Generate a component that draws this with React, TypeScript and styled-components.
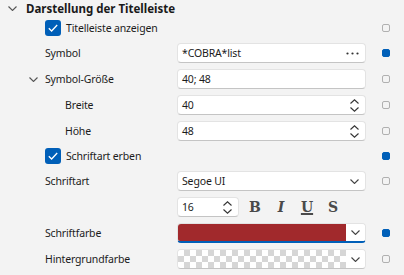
import styled, { createGlobalStyle } from 'styled-components';

const GlobalStyle = createGlobalStyle`
  html, body {
    margin: 0;
    padding: 0;
    background: #f3f3f3;
    font-family: "Segoe UI", "Noto Sans", "Liberation Sans", sans-serif;
    font-size: 10.5px;
    letter-spacing: -0.15px;
    color: #1b1b1b;
  }
`;

const Panel = styled.div`
  width: 404px;
  height: 275px;
  overflow: hidden;
  display: flex;
  flex-direction: column;
`;

const Header = styled.div`
  height: 16px;
  display: flex;
  align-items: center;
  padding-left: 8px;
  gap: 9px;
  font-weight: 700;
  font-size: 11.5px;
  letter-spacing: 0;
  color: #1a1a1a;
`;

const Row = styled.div<{ $h?: number }>`
  display: grid;
  grid-template-columns: 177px 189px 16px 8px;
  align-items: center;
  height: ${p => p.$h ?? 26}px;
`;

const Label = styled.div<{ $indent: number }>`
  display: flex;
  align-items: center;
  padding-left: ${p => p.$indent}px;
  white-space: nowrap;
`;

const Slot = styled.span`
  width: 16px;
  display: flex;
  align-items: center;
`;

const CheckLabel = styled.label`
  grid-column: 1 / 3;
  display: flex;
  align-items: center;
  gap: 5px;
  padding-left: 45px;
`;

const Box = styled.span`
  width: 16px;
  height: 16px;
  border-radius: 3px;
  background: #005fb8;
  display: flex;
  align-items: center;
  justify-content: center;
`;

const Field = styled.div`
  height: 20px;
  box-sizing: border-box;
  background: #fff;
  border: 1px solid #e3e3e3;
  border-bottom-color: #c4c4c4;
  border-radius: 4px;
  display: flex;
  align-items: center;
  padding: 0 6px 0 4px;
  justify-content: space-between;
`;

const SmallField = styled(Field)`
  width: 62px;
`;

const Tools = styled.div`
  display: flex;
  align-items: center;
`;

const StyleBtn = styled.span<{ $deco?: string; $italic?: boolean }>`
  width: 26px;
  text-align: center;
  font-family: "DejaVu Serif", "Liberation Serif", serif;
  font-weight: 700;
  font-size: 14px;
  letter-spacing: 0;
  color: #4a4a4a;
  font-style: ${p => (p.$italic ? 'italic' : 'normal')};
  text-decoration: ${p => p.$deco ?? 'none'};
  text-decoration-thickness: 2px;
`;

const Swatch = styled.div<{ $focused?: boolean }>`
  height: 20px;
  box-sizing: border-box;
  display: flex;
  border-radius: 4px;
  overflow: hidden;
  border: 1px solid #e3e3e3;
  border-bottom: ${p => (p.$focused ? '2px solid #005fb8' : '1px solid #c4c4c4')};
`;

const Fill = styled.div<{ $color?: string }>`
  flex: 1;
  background: ${p => p.$color ?? '#fff'};
  background-image: ${p =>
    p.$color
      ? 'none'
      : 'linear-gradient(45deg, #d6d6d6 25%, transparent 25%, transparent 75%, #d6d6d6 75%), linear-gradient(45deg, #d6d6d6 25%, transparent 25%, transparent 75%, #d6d6d6 75%)'};
  background-size: 12px 12px;
  background-position: 0 0, 6px 6px;
`;

const DropBtn = styled.div`
  width: 19px;
  background: #fff;
  display: flex;
  align-items: center;
  justify-content: center;
`;

const Indicator = styled.span<{ $active?: boolean }>`
  grid-column: 4;
  width: 8px;
  height: 8px;
  box-sizing: border-box;
  border-radius: 2px;
  background: ${p => (p.$active ? '#005fb8' : 'transparent')};
  border: 1px solid ${p => (p.$active ? '#005fb8' : '#b0b0b0')};
`;

const Chevron = ({ color = '#444' }: { color?: string }) => (
  <svg width="9" height="5" viewBox="0 0 9 5">
    <path d="M0.5 0.5 L4.5 4.5 L8.5 0.5" fill="none" stroke={color} strokeWidth="1.1" />
  </svg>
);

const Check = () => (
  <svg width="10" height="8" viewBox="0 0 10 8">
    <path d="M0.8 4.2 L3.6 7 L9.2 1" fill="none" stroke="#fff" strokeWidth="1.3" />
  </svg>
);

const Spin = () => (
  <svg width="9" height="13" viewBox="0 0 9 13">
    <path d="M0.5 4.5 L4.5 0.8 L8.5 4.5 M0.5 8.5 L4.5 12.2 L8.5 8.5" fill="none" stroke="#333" strokeWidth="1.1" />
  </svg>
);

const Dots = () => (
  <svg width="13" height="3" viewBox="0 0 13 3">
    <circle cx="1.5" cy="1.5" r="1.1" fill="#333" />
    <circle cx="6.5" cy="1.5" r="1.1" fill="#333" />
    <circle cx="11.5" cy="1.5" r="1.1" fill="#333" />
  </svg>
);

export default function App() {
  return (
    <>
      <GlobalStyle />
      <Panel>
        <Header>
          <Chevron color="#555" />
          <span>Darstellung der Titelleiste</span>
        </Header>

        <Row $h={24}>
          <CheckLabel>
            <Box><Check /></Box>
            Titelleiste anzeigen
          </CheckLabel>
          <span />
          <Indicator />
        </Row>

        <Row>
          <Label $indent={45}>Symbol</Label>
          <Field><span>*COBRA*list</span><Dots /></Field>
          <span />
          <Indicator $active />
        </Row>

        <Row>
          <Label $indent={29}><Slot><Chevron color="#555" /></Slot>Symbol-Größe</Label>
          <Field><span>40; 48</span></Field>
          <span />
          <Indicator />
        </Row>

        <Row>
          <Label $indent={65}>Breite</Label>
          <Field><span>40</span><Spin /></Field>
          <span />
          <Indicator />
        </Row>

        <Row>
          <Label $indent={65}>Höhe</Label>
          <Field><span>48</span><Spin /></Field>
          <span />
          <Indicator />
        </Row>

        <Row $h={24}>
          <CheckLabel>
            <Box><Check /></Box>
            Schriftart erben
          </CheckLabel>
          <span />
          <Indicator $active />
        </Row>

        <Row>
          <Label $indent={45}>Schriftart</Label>
          <Field><span>Segoe UI</span><Chevron /></Field>
          <span />
          <Indicator />
        </Row>

        <Row>
          <span />
          <Tools>
            <SmallField><span>16</span><Spin /></SmallField>
            <StyleBtn style={{ marginLeft: 3 }}>B</StyleBtn>
            <StyleBtn $italic>I</StyleBtn>
            <StyleBtn $deco="underline">U</StyleBtn>
            <StyleBtn>S</StyleBtn>
          </Tools>
        </Row>

        <Row>
          <Label $indent={45}>Schriftfarbe</Label>
          <Swatch $focused>
            <Fill $color="#a1292c" />
            <DropBtn><Chevron /></DropBtn>
          </Swatch>
          <span />
          <Indicator $active />
        </Row>

        <Row>
          <Label $indent={45}>Hintergrundfarbe</Label>
          <Swatch>
            <Fill />
            <DropBtn><Chevron /></DropBtn>
          </Swatch>
          <span />
          <Indicator />
        </Row>
      </Panel>
    </>
  );
}
